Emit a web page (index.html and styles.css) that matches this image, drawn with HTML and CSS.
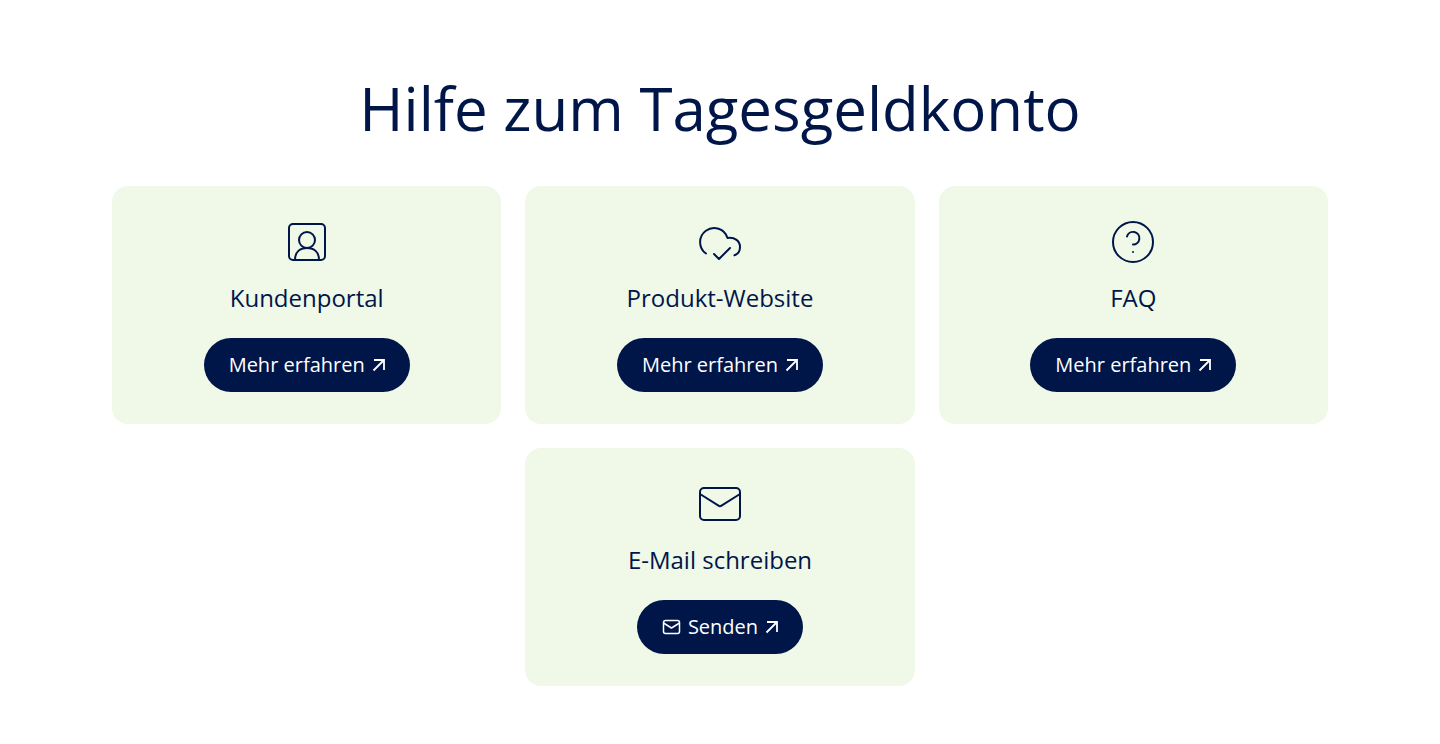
FILE: index.html
```
<!DOCTYPE html>
<html lang="de">
<head>
    <meta charset="UTF-8">
    <meta name="viewport" content="width=device-width, initial-scale=1.0">
    <title>Hilfe zum Tagesgeldkonto</title>
    <link rel="stylesheet" href="styles.css">
</head>
<body>
    <!-- Shared button icons -->
    <svg class="icon-defs" width="0" height="0" aria-hidden="true">
        <symbol id="arrow" viewBox="0 0 14 14">
            <path d="M2.500 12.500L13 2M3 2H13V12"/>
        </symbol>
    </svg>
    <main class="help-section">
        <h1>Hilfe zum Tagesgeldkonto</h1>
        <div class="card-list">
            <section class="card">
                <svg class="card-icon" viewBox="0 0 48 48" aria-hidden="true">
                    <rect x="6" y="6" width="36" height="36" rx="4"/>
                    <circle cx="24" cy="22" r="8"/>
                    <path d="M12 42C12 34 17 30 24 30S36 34 36 42"/>
                </svg>
                <h2>Kundenportal</h2>
                <a href="#" class="btn">Mehr erfahren <svg class="arrow" aria-hidden="true"><use href="#arrow"/></svg></a>
            </section>
            <section class="card">
                <svg class="card-icon" viewBox="0 0 48 48" aria-hidden="true">
                    <path d="M10 35.500A14 14 0 1 1 31.500 20C39 19 44 23 44 29C44 32.500 42 36 38.500 37.300"/>
                    <path d="M18 36L23 41L34 30"/>
                </svg>
                <h2>Produkt-Website</h2>
                <a href="#" class="btn">Mehr erfahren <svg class="arrow" aria-hidden="true"><use href="#arrow"/></svg></a>
            </section>
            <section class="card">
                <svg class="card-icon" viewBox="0 0 48 48" aria-hidden="true">
                    <circle cx="24" cy="24" r="20"/>
                    <path d="M18 18.500A6.300 6.300 0 1 1 24 26.500"/>
                    <path d="M24 34V34.100"/>
                </svg>
                <h2>FAQ</h2>
                <a href="#" class="btn">Mehr erfahren <svg class="arrow" aria-hidden="true"><use href="#arrow"/></svg></a>
            </section>
            <section class="card">
                <svg class="card-icon" viewBox="0 0 48 48" aria-hidden="true">
                    <rect x="4" y="8" width="40" height="32" rx="4"/>
                    <path d="M4 14L22.500 25.700Q24 26.700 25.500 25.700L44 14"/>
                </svg>
                <h2>E-Mail schreiben</h2>
                <a href="#" class="btn">
                    <svg class="mail" viewBox="0 0 20 20" aria-hidden="true">
                        <rect x="1.500" y="3.500" width="16" height="13" rx="2"/>
                        <path d="M1.500 6L9.500 11L17.500 6"/>
                    </svg>
                    Senden
                    <svg class="arrow" aria-hidden="true"><use href="#arrow"/></svg>
                </a>
            </section>
        </div>
    </main>
</body>
</html>
```

FILE: styles.css
```
body {
    margin: 0;
    background-color: white;
    color: #001648;
    font-family: "Open Sans", sans-serif;
}
.icon-defs {
    position: absolute;
}
svg {
    fill: none;
    stroke: currentColor;
    stroke-linejoin: round;
}
.help-section {
    max-width: 1216px;
    margin: 0 auto;
    padding: 64px 24px 56px;
}
h1 {
    margin: 0 0 34px;
    font-size: 60px;
    line-height: 88px;
    font-weight: 400;
    text-align: center;
}
.card-list {
    display: flex;
    flex-wrap: wrap;
    justify-content: center;
    gap: 24px;
}
.card {
    display: flex;
    flex-direction: column;
    align-items: center;
    flex: 0 1 calc((100% - 48px) / 3);
    min-width: 280px;
    box-sizing: border-box;
    padding: 32px;
    background-color: #f0f8e8;
    border-radius: 16px;
}
.card-icon {
    width: 48px;
    height: 48px;
    stroke-width: 2;
    stroke-linecap: round;
}
.card h2 {
    margin: 16px 0 24px;
    font-size: 24px;
    line-height: 32px;
    font-weight: 400;
}
.btn {
    display: flex;
    align-items: center;
    gap: 6px;
    padding: 12px 25px;
    border-radius: 27px;
    background-color: #001648;
    color: white;
    font-size: 20px;
    line-height: 30px;
    font-weight: 500;
    text-decoration: none;
}
.btn:hover {
    background-color: #0a2a6b;
}
.arrow {
    width: 14px;
    height: 14px;
    stroke-width: 1.8;
    stroke-linejoin: miter;
}
.mail {
    width: 20px;
    height: 20px;
    stroke-width: 1.5;
}
```
